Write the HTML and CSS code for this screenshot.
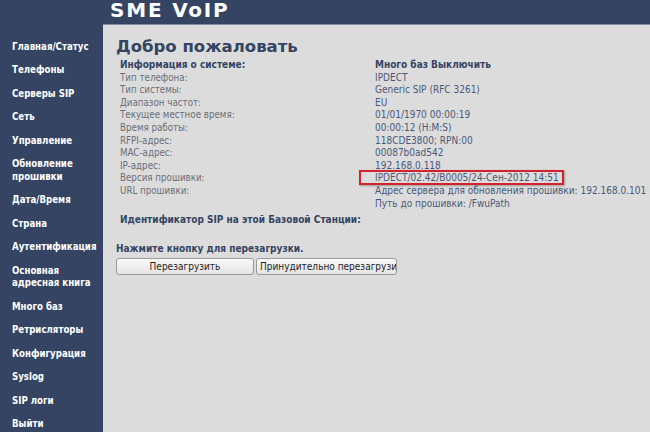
FILE: index.html
```html
<!DOCTYPE html>
<html lang="ru">
<head>
  <meta charset="UTF-8">
  <title>SME VoIP</title>
  <link rel="stylesheet" href="styles.css">
</head>
<body>

  <div class="top">
    <span class="logo">SME VoIP</span>
  </div>

  <div class="page">
    <ul class="menu">
      <li>Главная/Статус</li>
      <li>Телефоны</li>
      <li>Серверы SIP</li>
      <li>Сеть</li>
      <li>Управление</li>
      <li>Обновление<br>прошивки</li>
      <li>Дата/Время</li>
      <li>Страна</li>
      <li>Аутентификация</li>
      <li>Основная<br>адресная книга</li>
      <li>Много баз</li>
      <li>Ретрисляторы</li>
      <li>Конфигурация</li>
      <li>Syslog</li>
      <li>SIP логи</li>
      <li>Выйти</li>
    </ul>

    <div class="content">
      <h1>Добро пожаловать</h1>

      <div class="info">
        <div class="lbl head">Информация о системе:</div>
        <div class="val head">Много баз Выключить</div>

        <div class="lbl">Тип телефона:</div>
        <div class="val">IPDECT</div>

        <div class="lbl">Тип системы:</div>
        <div class="val">Generic SIP (RFC 3261)</div>

        <div class="lbl">Диапазон частот:</div>
        <div class="val">EU</div>

        <div class="lbl">Текущее местное время:</div>
        <div class="val">01/01/1970 00:00:19</div>

        <div class="lbl">Время работы:</div>
        <div class="val">00:00:12 (H:M:S)</div>

        <div class="lbl">RFPI-адрес:</div>
        <div class="val">118CDE3800; RPN:00</div>

        <div class="lbl">MAC-адрес:</div>
        <div class="val">00087b0ad542</div>

        <div class="lbl">IP-адрес:</div>
        <div class="val">192.168.0.118</div>

        <div class="lbl">Версия прошивки:</div>
        <div class="val"><span class="marked">IPDECT/02.42/B0005/24-Сен-2012 14:51</span></div>

        <div class="lbl">URL прошивки:</div>
        <div class="val">Адрес сервера для обновления прошивки: 192.168.0.101<br>Путь до прошивки: /FwuPath</div>
      </div>

      <p class="sip">Идентификатор SIP на этой Базовой Станции:</p>

      <p class="hint">Нажмите кнопку для перезагрузки.</p>
      <div class="buttons">
        <button class="btn">Перезагрузить</button>
        <button class="btn left">Принудительно перезагрузить</button>
      </div>
    </div>
  </div>

</body>
</html>
```

FILE: styles.css
```css
html, body {
  height: 100%;
}

body {
  margin: 0;
  font-family: "DejaVu Sans Condensed", "DejaVu Sans", Verdana, sans-serif;
  font-size: 10px;
  background: #dcdcdc;
  overflow: hidden;
}

.top {
  height: 24px;
  background: #344462;
  border-bottom: 1px solid #8590a8;
  padding-left: 110px;
}

.logo {
  display: block;
  color: #fff;
  font-family: "DejaVu Sans", Verdana, sans-serif;
  font-weight: bold;
  font-size: 20px;
  letter-spacing: 1.8px;
  line-height: 20px;
}

.page {
  display: flex;
  height: calc(100% - 25px);
}

.menu {
  width: 103px;
  margin: -1px 0 0;
  padding: 11px 0 0 12px;
  box-sizing: border-box;
  background: #344462;
  list-style: none;
  color: #fff;
  font-weight: bold;
  font-size: 9.6px;
  line-height: 12.5px;
}

.menu li {
  padding: 5.5px 0 5.5px;
  white-space: nowrap;
}

.content {
  flex: 1;
  padding: 12px 0 0 13px;
}

h1 {
  margin: 0 0 2px;
  font-family: "DejaVu Sans", Verdana, sans-serif;
  font-size: 16.5px;
  line-height: 20px;
  color: #344462;
}

.info {
  display: grid;
  grid-template-columns: 255px auto;
  padding-left: 4px;
  line-height: 12.6px;
  color: #6a6e78;
  white-space: nowrap;
}

.info .lbl {
  font-size: 9.7px;
}

.info .val {
  color: #4a5878;
}

.info .head {
  font-size: 10px;
  font-weight: bold;
  color: #344462;
}

.marked {
  position: relative;
}

.marked::before {
  content: "";
  position: absolute;
  left: -16px;
  right: -5px;
  top: -2px;
  bottom: -2px;
  border: 2px solid #d3222b;
  box-shadow: 1px 1px 2px rgba(0,0,0,0.3);
}

.sip {
  margin: 4px 0 0 4px;
  font-weight: bold;
  color: #344462;
  line-height: 12.6px;
}

.hint {
  margin: 16px 0 3px;
  font-weight: bold;
  color: #344462;
  line-height: 12.6px;
}

.buttons {
  display: flex;
  gap: 2px;
}

.btn {
  width: 138px;
  height: 17px;
  padding: 0 3px;
  font-family: "DejaVu Sans Condensed", "DejaVu Sans", Verdana, sans-serif;
  font-size: 10px;
  color: #222;
  background: linear-gradient(#fafafa, #e4e4e4);
  border: 1px solid #9a9a9a;
  border-radius: 3px;
  overflow: hidden;
  white-space: nowrap;
}

.btn.left {
  width: 141px;
  text-align: left;
}
```
